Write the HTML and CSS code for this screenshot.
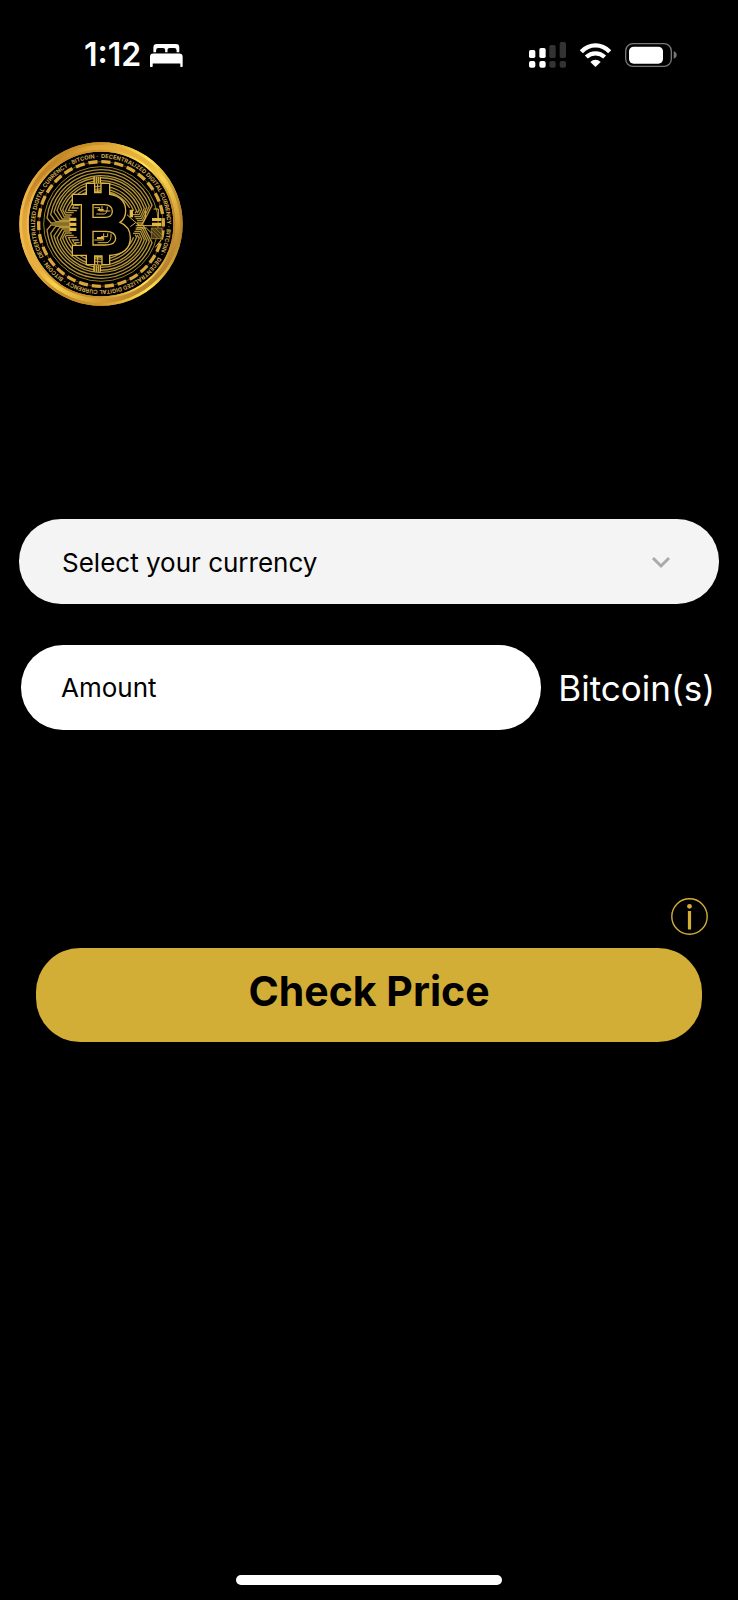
FILE: index.html
```html
<!DOCTYPE html>
<html lang="en">
<head>
<meta charset="utf-8">
<meta name="viewport" content="width=device-width, initial-scale=1">
<title>Bitcoin price</title>
<link rel="stylesheet" href="styles.css">
</head>
<body>
<header class="status">
  <div class="status-group">
    <time class="clock">1:12</time>
    <svg class="bed" viewBox="0 0 98 68" role="img" aria-label="Sleep focus"><path fill="#fff" d="M10 24V10Q10 0 20 0H77Q87 0 87 10V24H79V19Q79 12 72 12H58Q52 12 52 18V24H45V18Q45 12 39 12H25Q18 12 18 19V24ZM0 66V38Q0 28 10 28H87Q97 28 97 38V66Q97 68 95 68H92Q90 68 90 66V58H8V66Q8 68 6 68H2Q0 68 0 66Z"/></svg>
  </div>
  <div class="status-group status-right">
    <svg class="signal" viewBox="0 0 111 78" role="img" aria-label="Signal"><g fill="#fff"><rect x="0" y="24" width="19" height="24" rx="5"/><rect x="31" y="18" width="19" height="30" rx="5"/><rect x="0" y="57" width="19" height="20" rx="6"/><rect x="31" y="57" width="19" height="20" rx="6"/></g><g fill="#333"><rect x="61" y="9" width="19" height="39" rx="5"/><rect x="92" y="0" width="19" height="48" rx="5"/><rect x="61" y="57" width="19" height="20" rx="6"/><rect x="92" y="57" width="19" height="20" rx="6"/></g></svg>
    <svg class="wifi" viewBox="0 0 93 72" role="img" aria-label="Wi-Fi"><g fill="none" stroke="#fff" stroke-width="13"><path d="M4 26Q22 7 46.500 7T89 26"/><path d="M19 42Q31 31 46.500 31T74 42"/></g><path fill="#fff" d="M46.500 72L31 57Q38 50 46.500 50T62 57Z"/></svg>
    <svg class="battery" viewBox="0 0 156 72" role="img" aria-label="Battery"><rect x="2" y="2" width="137" height="68" rx="22" fill="none" stroke="#777" stroke-width="4"/><rect x="12" y="11" width="102" height="51" rx="14" fill="#fff"/><path fill="#777" d="M146 25Q155 28 155 36T146 47Z"/></svg>
  </div>
</header>
<main class="content">
  <svg class="coin" viewBox="26 34 492 492" role="img" aria-label="Bitcoin coin">
    <defs>
      <linearGradient id="rim" x1="0" y1="0" x2="1" y2="1"><stop offset="0" stop-color="#a96c16"/><stop offset=".12" stop-color="#b87a1e"/><stop offset=".22" stop-color="#e0a53a"/><stop offset=".45" stop-color="#e9b23c"/><stop offset=".55" stop-color="#f7d24c"/><stop offset=".75" stop-color="#d09a35"/><stop offset=".88" stop-color="#b27a2c"/><stop offset="1" stop-color="#eebf55"/></linearGradient>
      <linearGradient id="rim-light" x1="0" y1="0" x2="1" y2="0"><stop offset="0" stop-color="#f3ba4d"/><stop offset=".25" stop-color="#c58a28"/><stop offset=".5" stop-color="#cf932b"/><stop offset=".8" stop-color="#ffe650"/><stop offset="1" stop-color="#b8852d"/></linearGradient>
      <path id="lettering" d="M272 82A198 198 0 0 1 272 478A198 198 0 0 1 272 82"/>
      <g id="traces">
        <path d="M180 277H122L110 262A163 163 0 0 1 425 224L398 277H380"/>
        <path d="M180 273H136L121 252A154 154 0 0 1 417 227L396 270H380"/>
        <path d="M180 269H148L131 244A146 146 0 0 1 409 230L393 264H376"/>
        <path d="M180 265H156L140 239A138 138 0 0 1 402 233L390 258H372"/>
        <path d="M180 259H162L150 235A130 130 0 0 1 394 235L386 252H368"/>
        <path d="M184 253H166L157 238A122 122 0 0 1 387 238L380 247"/>
        <path d="M190 246H168L165 241A114 114 0 0 1 379 241L374 248"/>
        <path d="M200 240H174A106 106 0 0 1 370 240"/>
        <path d="M205 232H186A98 98 0 0 1 358 232"/>
        <path d="M208 224H196V214A90 90 0 0 1 344 226"/>
      </g>
    </defs>
    <circle cx="272" cy="280" r="231" fill="none" stroke="url(#rim)" stroke-width="28"/>
    <circle cx="272" cy="280" r="241" fill="none" stroke="url(#rim-light)" stroke-width="8"/>
    <circle cx="272" cy="280" r="220" fill="none" stroke="url(#rim-light)" stroke-width="6"/>
    <text class="coin-text"><textPath href="#lettering" startOffset="0%">DECENTRALIZED DIGITAL CURRENCY · BITCOIN ·</textPath></text>
    <text class="coin-text"><textPath href="#lettering" startOffset="33.333%">DECENTRALIZED DIGITAL CURRENCY · BITCOIN ·</textPath></text>
    <text class="coin-text"><textPath href="#lettering" startOffset="66.666%">DECENTRALIZED DIGITAL CURRENCY · BITCOIN ·</textPath></text>
    <circle cx="272" cy="280" r="187" fill="none" stroke="#8c6a1c" stroke-width="2"/>
    <circle cx="272" cy="280" r="187" fill="none" stroke="#d9a63c" stroke-width="10" pathLength="300" stroke-dasharray="7 3" stroke-dashoffset="5"/>
    <circle cx="272" cy="280" r="172" fill="none" stroke="#9c7d27" stroke-width="3"/>
    <g fill="none" stroke="#b3933a" stroke-width="4">
      <use href="#traces"/>
      <use href="#traces" transform="translate(0 560) scale(1 -1)"/>
    </g>
    <g fill="#000" stroke="#dcb445" stroke-width="4">
      <path d="M186 191H228V158H253V186H272V158H298V191C329 195 346 214 346 240C346 257 339 268 329 275C349 283 360 300 360 321C360 350 341 371 298 374V402H275V376H253V402H228V374H186V344H213V222H186Z"/>
      <path d="M248 222H282Q306 223 306 242T282 260H248ZM248 302H286Q316 303 316 323T286 343H248Z"/>
      <path fill="none" stroke-width="3" d="M252 231H268V241H300M258 250H282Q291 249 291 228M275 226V239M252 328H280V308M262 336H290Q304 332 302 309M272 318H292V308"/>
    </g>
    <g fill="#e5b944">
      <path d="M249 138H272V158H249ZM249 404H272V423H249ZM177 261H198V271H177ZM177 276H198V286H177ZM177 291H198V301H177ZM425 262H453V271H425ZM425 276H453V287H425ZM358 237H368V260H358ZM262 235H280V240H262ZM260 319H278V325H260Z"/>
    </g>
    <path fill="none" stroke="#000" stroke-width="2" d="M255 138V158M261 138V158M267 138V158M255 404V423M261 404V423M267 404V423"/>
    <path fill="none" stroke="#dcb445" stroke-width="3" d="M262 160V186M262 376V402M350 252L372 272L390 286M360 288L376 276M376 285H428M376 292H408L428 312M405 240V262L394 282M430 235H444V262M435 350L452 328"/>
    <path fill="#4a3b16" stroke="#b3933a" stroke-width="2" d="M423 292H455V324H423ZM423 303L444 324M423 292L455 324M434 292L455 313"/>
  </svg>

  <form class="form">
    <div class="select-wrap">
      <select class="field currency" aria-label="Currency"><option>Select your currency</option><option>USD</option><option>EUR</option></select>
      <svg class="chevron" viewBox="0 0 20 14" aria-hidden="true"><path fill="none" stroke="#aaa" stroke-width="3" d="M2 3L10 11L18 3"/></svg>
    </div>
    <div class="amount-row">
      <input class="field amount" id="amount" type="text" inputmode="decimal" placeholder="Amount">
      <label class="unit" for="amount">Bitcoin(s)</label>
    </div>
    <button class="info" type="button" aria-label="Information">
      <svg class="info-icon" viewBox="0 0 37 37" aria-hidden="true"><circle cx="18.500" cy="18.500" r="17.700" fill="none" stroke="#d2ae37" stroke-width="1.400"/><circle cx="18.500" cy="8.300" r="2.400" fill="#d2ae37"/><path stroke="#d2ae37" stroke-width="3.200" d="M18.500 13V31.500"/></svg>
    </button>
    <button class="submit" type="submit">Check Price</button>
  </form>
</main>
<div class="home-bar"></div>
</body>
</html>
```
FILE: styles.css
```css
* {
  box-sizing: border-box;
}

body {
  margin: 0;
  min-height: 100vh;
  display: flex;
  flex-direction: column;
  background: #000;
  color: #fff;
  font-family: Inter, "Liberation Sans", sans-serif;
}

svg {
  display: block;
  flex: none;
}

.status {
  display: flex;
  justify-content: space-between;
  align-items: center;
  height: 110px;
  padding: 0 61px 0 84px;
}

.status-group {
  display: flex;
  align-items: center;
  gap: 9px;
}

.status-right {
  gap: 14px;
}

.clock {
  font-size: 32px;
  font-weight: 600;
  line-height: 32px;
}

.bed {
  width: 33px;
  height: 23px;
}

.signal {
  width: 37px;
  height: 26px;
}

.wifi {
  width: 31px;
  height: 24px;
}

.battery {
  width: 52px;
  height: 24px;
}

.content {
  padding: 32px 19px 0;
}

.coin {
  width: 164px;
  height: 164px;
}

.coin-text {
  font-size: 17px;
  font-weight: 700;
  fill: #d0a850;
}

.form {
  display: flex;
  flex-direction: column;
  margin-top: 213px;
}

.select-wrap {
  display: grid;
  align-items: center;
}

.select-wrap > * {
  grid-area: 1 / 1;
}

.field {
  width: 100%;
  height: 85px;
  padding: 0 40px;
  border: 0;
  border-radius: 42px;
  appearance: none;
  background: #fff;
  color: #000;
  font-family: inherit;
  font-size: 26px;
}

.currency {
  padding: 2px 43px 0;
  background: #f4f4f4;
}

.chevron {
  justify-self: end;
  width: 20px;
  height: 14px;
  margin-right: 48px;
  pointer-events: none;
}

.amount-row {
  display: flex;
  align-items: center;
  gap: 17px;
  margin-top: 41px;
  padding: 0 4px 0 2px;
}

.amount {
  flex: 1;
  min-width: 0;
}

.amount::placeholder {
  color: #000;
  opacity: 1;
}

.unit {
  font-size: 35px;
  line-height: 44px;
}

.info {
  align-self: flex-end;
  margin: 168px 11px 0 0;
  padding: 0;
  border: 0;
  background: none;
}

.info-icon {
  width: 37px;
  height: 37px;
}

.submit {
  height: 94px;
  margin: 13px 17px 0;
  padding: 0 0 8px;
  border: 0;
  border-radius: 44px;
  background: #d2ae37;
  color: #000;
  font-family: inherit;
  font-size: 41px;
  font-weight: 700;
}

.home-bar {
  width: 36%;
  height: 10px;
  margin: auto auto 15px;
  border-radius: 5px;
  background: #fff;
}
```
